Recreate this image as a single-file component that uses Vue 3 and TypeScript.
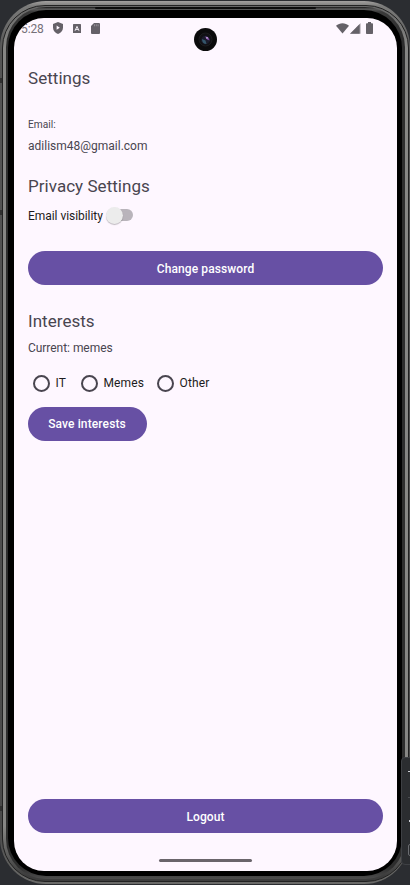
<script setup lang="ts">
import { ref } from 'vue'

const email = 'adilism48@gmail.com'
const visible = ref(false)
const current = 'memes'
const options = ['IT', 'Memes', 'Other']
const selected = ref<string | null>(null)
</script>

<template>
  <div class="desk">
    <i class="side-key k1"></i>
    <i class="side-key k2"></i>
    <i class="side-key k3"></i>
    <div class="shell">
      <div class="rim">
        <div class="groove">
          <div class="bezel">
            <div class="screen">
              <header class="status">
                <span class="clock">5:28</span>
                <svg class="shield" width="10" height="12" viewBox="0 0 10 12">
                  <path d="M5 0 10 2v3.6C10 8.600 7.900 11 5 12 2.100 11 0 8.600 0 5.600V2Z" fill="#656168" />
                  <path d="M3.600 3.600v4.200L6.800 5.700Z" fill="#fef7ff" />
                </svg>
                <svg class="letter" width="8" height="9" viewBox="0 0 8 9">
                  <rect width="8" height="9" rx=".6" fill="#656168" />
                  <path d="M2 6.800 4 2.400l2 4.400M2.800 5.400h2.400" fill="none" stroke="#fef7ff" stroke-width=".9" />
                </svg>
                <svg class="card" width="9" height="11" viewBox="0 0 9 11">
                  <path d="M3 0h5a1 1 0 0 1 1 1v9a1 1 0 0 1-1 1H1a1 1 0 0 1-1-1V3Z" fill="#656168" />
                  <path d="M3.500 1.300v2M5.300 1.300v2M7.100 1.300v2" stroke="#a5a0a7" stroke-width=".7" />
                </svg>
                <svg class="wifi" width="13" height="11" viewBox="0 0 13 11">
                  <path d="M0 2.700C3.600-.7 9.400-.7 13 2.700L6.500 10.600Z" fill="#656168" />
                </svg>
                <svg class="signal" width="11" height="11" viewBox="0 0 11 11">
                  <path d="M10.700 0v10.700H0Z" fill="#b8b3ba" />
                  <path d="M9.700 1v9.700H0Z" fill="#656168" />
                </svg>
                <svg class="battery" width="7" height="12" viewBox="0 0 7 12">
                  <path d="M2 0h3v1.300h1.200a.8.8 0 0 1 .8.800v9.100a.8.8 0 0 1-.8.800H.8a.8.8 0 0 1-.8-.8V2.100a.8.8 0 0 1 .8-.8H2Z" fill="#656168" />
                </svg>
              </header>

              <main class="content">
                <h1 class="heading title">Settings</h1>
                <p class="label">Email:</p>
                <p class="body address">{{ email }}</p>

                <h2 class="heading privacy">Privacy Settings</h2>
                <div class="toggle-row">
                  <span class="toggle-text">Email visibility</span>
                  <span class="switch" :class="{ on: visible }" @click="visible = !visible"><b></b></span>
                </div>
                <button class="btn change">Change password</button>

                <h2 class="heading interests">Interests</h2>
                <p class="body current">Current: {{ current }}</p>
                <div class="radios">
                  <label v-for="o in options" :key="o" class="radio" @click="selected = o">
                    <i class="ring" :class="{ on: selected === o }"></i>
                    <span>{{ o }}</span>
                  </label>
                </div>
                <button class="btn save">Save interests</button>
                <button class="btn logout">Logout</button>
              </main>
              <div class="home-bar"></div>
            </div>
          </div>
        </div>
      </div>
    </div>
    <svg class="camera" width="24" height="24" viewBox="0 0 24 24">
      <circle cx="11.500" cy="11.500" r="11.500" fill="#0b0b0c" />
      <circle cx="11.500" cy="11.500" r="6.500" fill="#111114" stroke="#1c1c1f" />
      <circle cx="11.500" cy="12" r="4.300" fill="#1b1c2c" />
      <path d="M8 11q0 5 4.500 5l-1-3.500Z" fill="#34566a" />
      <path d="M11 8.500q4 0 4.500 4l-2.500-1Z" fill="#7c489e" />
      <circle cx="13" cy="9.800" r=".9" fill="#d0b0e4" />
    </svg>
    <i class="speaker"></i>
    <aside class="toolbar">
      <i class="dash"></i>
      <i class="rule"></i>
      <i class="dot"></i>
      <i class="box"></i>
    </aside>
  </div>
</template>

<style>
body {
  background: #2b2d31;
  overflow: hidden;
}
</style>

<style scoped>
* {
  box-sizing: border-box;
}
.desk {
  position: relative;
  width: 410px;
  height: 885px;
  padding-top: 1px;
  overflow: hidden;
  background: #2b2d31;
  font-family: Roboto, sans-serif;
}
.shell {
  height: 883px;
  padding: 4px 1px 2px 2px;
  border-radius: 46px;
  background: linear-gradient(#a3a19f, #7b7b7a 5px, #555 50px, #4a4a4a 830px, #6a6a68);
}
.rim {
  height: 877px;
  padding: 1px 3px 2px;
  border-radius: 43px;
  border: 1px solid #222;
  background: linear-gradient(#666, #868684 40px, #868684 820px, #3c3c3c 870px);
}
.groove {
  height: 872px;
  padding: 3px 3px 3px 2px;
  border-radius: 40px;
  background: linear-gradient(#151515, #5a5a5a 2px, #3a3a3a 5px, #2d2d2d 30px, #2d2d2d 860px, #4d4d4d);
}
.bezel {
  height: 866px;
  padding: 8px 5px 5px 6px;
  border-radius: 38px;
  background: #000;
}
.screen {
  display: flex;
  flex-direction: column;
  height: 853px;
  border-radius: 30px;
  overflow: hidden;
  background: #fef7ff;
}
.status {
  display: flex;
  height: 22px;
  padding: 4px 24px 0 7px;
  align-items: flex-start;
}
.clock {
  width: 32px;
  font-size: 12px;
  line-height: 14px;
  letter-spacing: -0.1px;
  color: #757078;
}
.letter {
  margin: 2px 0 0 10px;
}
.card {
  margin: 1px 0 0 10px;
}
.wifi {
  margin: 1px 1px 0 auto;
}
.signal {
  margin: 1px 5px 0 0;
}
.content {
  display: flex;
  flex-direction: column;
  align-items: flex-start;
  flex: 1;
  padding: 0 14px 38px;
}
h1,
h2,
p {
  margin: 0;
}
.heading {
  font-size: 17px;
  font-weight: 400;
  line-height: 24px;
  letter-spacing: 0.04px;
  color: #49454f;
}
.title {
  margin-top: 26px;
}
.label {
  margin-top: 29px;
  font-size: 10.2px;
  line-height: 12px;
  color: #49454f;
}
.body {
  font-size: 12px;
  line-height: 16px;
  color: #49454f;
}
.address {
  margin-top: 7px;
}
.privacy {
  margin-top: 20px;
}
.toggle-row {
  display: flex;
  align-items: center;
  height: 18px;
  margin-top: 8px;
  font-size: 12px;
  letter-spacing: -0.05px;
  color: #1d1b20;
}
.toggle-text {
  width: 79px;
  padding-top: 2px;
}
.switch {
  display: flex;
  align-items: center;
  width: 26px;
  height: 12px;
  border-radius: 6px;
  background: #b9b4bb;
}
.switch b {
  width: 17px;
  height: 17px;
  flex: none;
  margin-left: -1px;
  border-radius: 50%;
  background: #ececec;
  box-shadow: 0 1px 1px rgba(0, 0, 0, 0.25);
}
.switch.on b {
  margin-left: 9px;
}
.btn {
  height: 34px;
  padding: 0;
  border: 0;
  border-radius: 17px;
  background: #6750a4;
  color: #fff;
  font: 500 12px/34px Roboto, sans-serif;
  padding-top: 1px;
  letter-spacing: 0.1px;
}
.change,
.logout {
  align-self: stretch;
}
.change {
  margin-top: 27px;
}
.interests {
  margin-top: 24px;
}
.current {
  margin-top: 7px;
  letter-spacing: -0.04px;
}
.radios {
  display: flex;
  gap: 13px;
  height: 18px;
  margin: 18px 0 15px 5px;
}
.radio {
  display: flex;
  align-items: center;
  gap: 5.5px;
  font-size: 12px;
  letter-spacing: 0.12px;
  color: #1d1b20;
}
.radio:first-child {
  min-width: 35px;
}
.ring {
  width: 17px;
  height: 17px;
  border: 2px solid #49454f;
  border-radius: 50%;
}
.ring.on {
  border-color: #6750a4;
  background: radial-gradient(#6750a4 4px, transparent 5px);
}
.save {
  width: 119px;
  padding: 0 1px 0 0;
  letter-spacing: 0.12px;
}
.logout {
  margin-top: auto;
}
.home-bar {
  position: absolute;
  left: 159px;
  top: 859px;
  width: 93px;
  height: 3px;
  border-radius: 2px;
  background: #6a656b;
}
.camera {
  position: absolute;
  left: 194px;
  top: 28px;
}
.speaker {
  position: absolute;
  left: 95px;
  top: 7px;
  width: 221px;
  height: 2px;
  border-radius: 1px;
  background: #0c0c0c;
}
.side-key {
  position: absolute;
  z-index: 1;
  left: 0;
  width: 2px;
  height: 5px;
  background: #303030;
}
.k1 {
  top: 78px;
}
.k2 {
  top: 210px;
}
.k3 {
  top: 806px;
}
.toolbar {
  position: absolute;
  left: 401px;
  top: 757px;
  width: 20px;
  height: 108px;
  border: 1px solid #3e4044;
  border-radius: 4px;
  background: #2b2d30;
}
.toolbar i {
  position: absolute;
}
.dash {
  left: 6px;
  top: 13px;
  width: 6px;
  height: 1px;
  background: #ced0d6;
}
.rule {
  left: 6px;
  top: 39px;
  width: 6px;
  height: 1px;
  background: #4a4c50;
}
.dot {
  left: 7px;
  top: 62px;
  width: 4px;
  height: 2px;
  background: #ced0d6;
}
.box {
  left: 6px;
  top: 86px;
  width: 12px;
  height: 12px;
  border: 1px solid #6a6c70;
  border-radius: 2px;
}
</style>
